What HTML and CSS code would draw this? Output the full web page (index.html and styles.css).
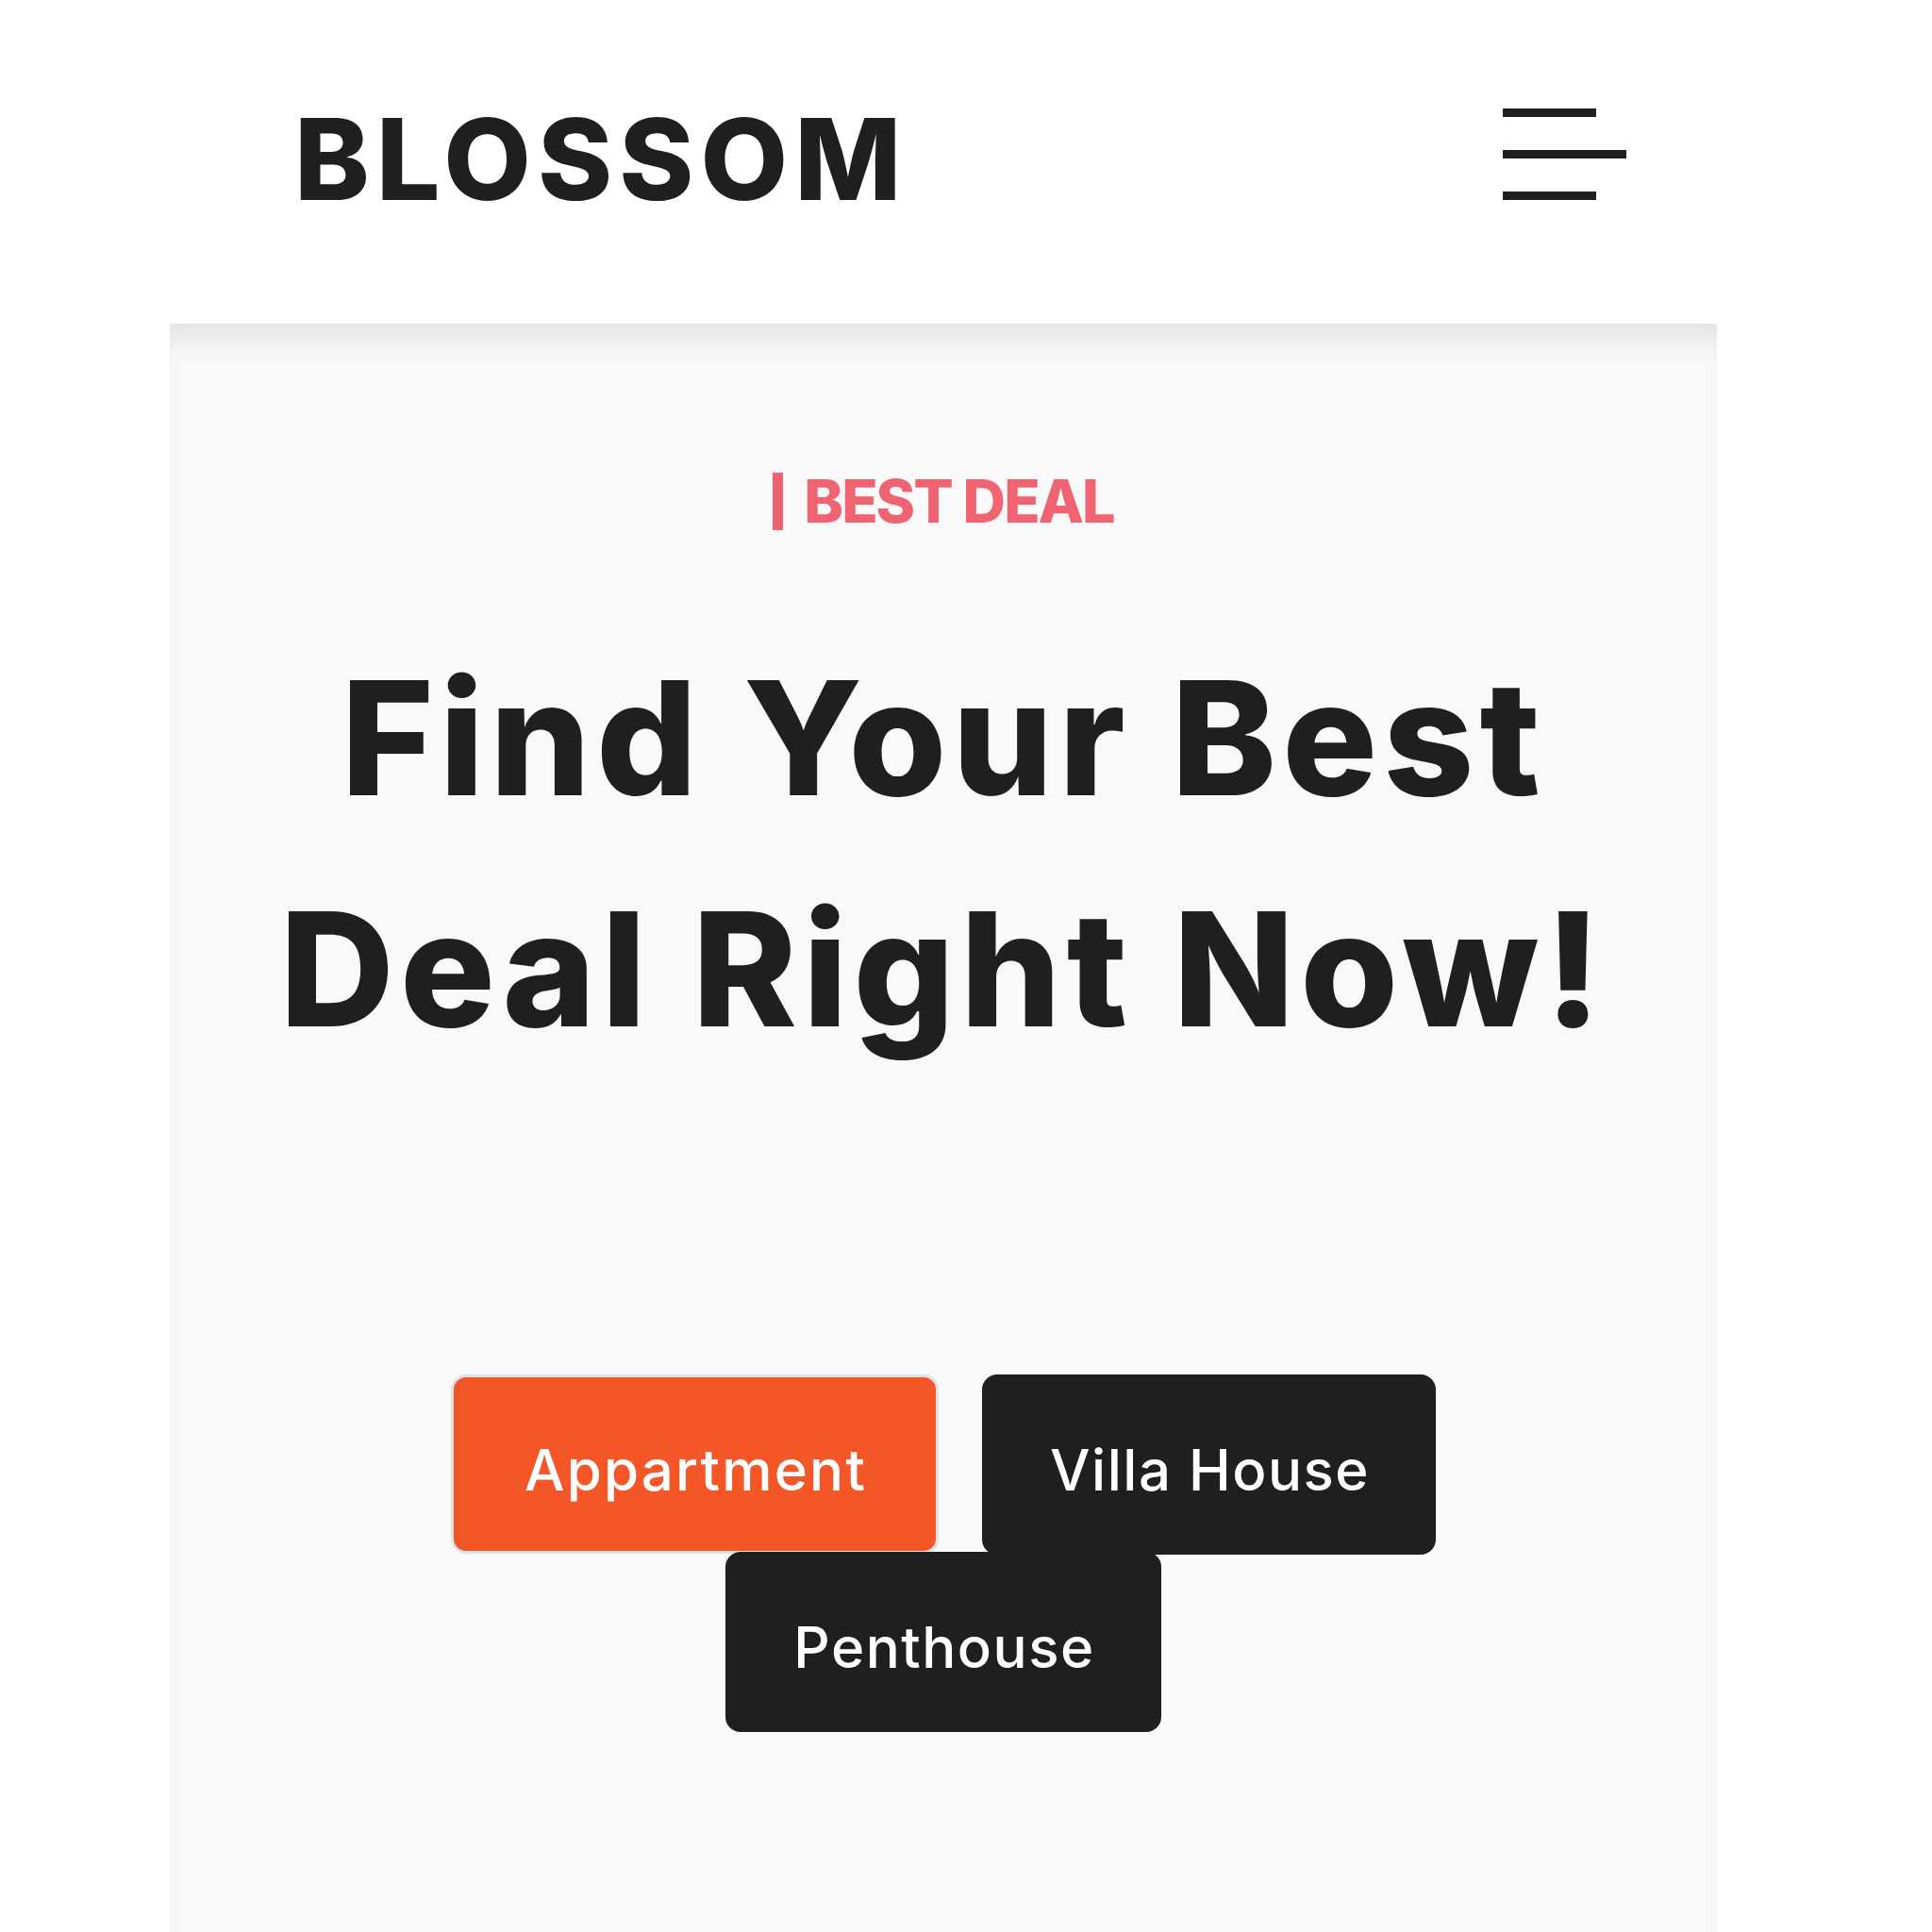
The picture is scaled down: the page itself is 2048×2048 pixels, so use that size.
FILE: index.html
```html
<!DOCTYPE html>
<html lang="en">
<head>
<meta charset="utf-8">
<title>Blossom</title>
<link rel="stylesheet" href="styles.css">
</head>
<body>
<header class="site-header">
  <div class="logo">BLOSSOM</div>
  <button class="menu-toggle" aria-label="Menu">
    <span class="bar bar-short"></span>
    <span class="bar bar-long"></span>
    <span class="bar bar-short"></span>
  </button>
</header>
<main class="hero">
  <p class="eyebrow"><span class="eyebrow-mark"></span><span class="eyebrow-text">BEST DEAL</span></p>
  <h1 class="hero-title">Find Your Best<br>Deal Right Now!</h1>
  <div class="tabs">
    <button class="tab tab-active">Appartment</button>
    <button class="tab">Villa House</button>
    <button class="tab tab-wrapped">Penthouse</button>
  </div>
</main>
</body>
</html>
```
FILE: styles.css
```css
* { box-sizing: border-box; }
html, body { margin: 0; padding: 0; }
body {
  background: #ffffff;
  font-family: Inter, "Noto Sans", sans-serif;
  color: #1f1f1f;
  width: 2048px;
  min-height: 2048px;
  overflow: hidden;
}
.site-header {
  height: 343px;
  display: flex;
  justify-content: space-between;
  align-items: flex-start;
  padding: 0 324px 0 312px;
}
.logo {
  margin-top: 109px;
  font-size: 120px;
  font-weight: 800;
  line-height: 1;
  letter-spacing: 7px;
  color: #1f1f1f;
}
.menu-toggle {
  margin-top: 115px;
  padding: 0;
  border: 0;
  background: none;
  display: flex;
  flex-direction: column;
  align-items: flex-start;
  gap: 35px;
  width: 131px;
}
.bar {
  display: block;
  height: 9px;
  background: #1f1f1f;
}
.bar-short { width: 99px; }
.bar-long { width: 131px; }

.hero {
  margin-left: 180px;
  width: 1640px;
  min-height: 1705px;
  background: #f9f9f9;
  box-shadow: inset 0 30px 30px -15px rgba(0,0,0,0.09);
  padding-top: 157px;
  text-align: center;
}
.eyebrow {
  margin: 0;
  display: flex;
  justify-content: center;
  align-items: center;
  gap: 22px;
  color: #ef6470;
  font-size: 63px;
  font-weight: 800;
  line-height: 63px;
  letter-spacing: -2px;
}
.eyebrow-mark {
  display: block;
  width: 11px;
  height: 61px;
  background: #ef6470;
}
.hero-title {
  margin: 97px 0 0;
  font-size: 168px;
  font-weight: 800;
  line-height: 245px;
  letter-spacing: 6px;
  color: #1f1f1f;
}
.tabs {
  margin: 307px auto 0;
  max-width: 1100px;
  display: flex;
  flex-wrap: wrap;
  justify-content: center;
  align-items: flex-start;
  column-gap: 46px;
  row-gap: 0;
}
.tab {
  font-family: Inter, "Noto Sans", sans-serif;
  font-size: 60px;
  font-weight: 500;
  letter-spacing: 1.5px;
  color: #ffffff;
  background: #1f1f1f;
  border: 0;
  border-radius: 16px;
  height: 191px;
  padding: 11px 70px 0 72px;
  line-height: 1;
}
.tab-active {
  background: #f45727;
  border: 3px solid #dde2e9;
  height: 190px;
  border-radius: 16px;
  padding-left: 75px;
  padding-right: 73px;
  letter-spacing: 2.2px;
}
.tab-wrapped {
  margin-top: -3px;
}
```
